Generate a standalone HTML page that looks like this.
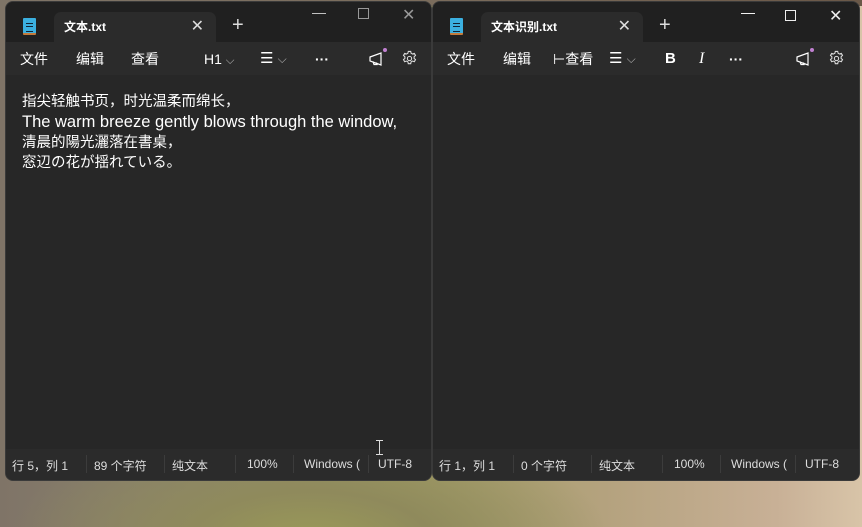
<!DOCTYPE html>
<html><head><meta charset="utf-8"><style>
*{margin:0;padding:0;box-sizing:border-box}
body{width:862px;height:527px;overflow:hidden;position:relative;font-family:"Liberation Sans","Noto Sans CJK SC",sans-serif;
background:radial-gradient(ellipse 300px 120px at 310px 540px,#9a9a58 0%,#8f8a5c 40%,transparent 100%),linear-gradient(90deg,#7f7467 0%,#8f8870 30%,#a3a064 45%,#b4a27e 70%,#c8b096 90%,#d8c4a8 100%);}
.top{position:absolute;left:0;top:0;width:862px;height:6px;background:linear-gradient(90deg,#7e7467,#7a6c5c 50%,#6a5848)}
.win{position:absolute;top:1px;height:480px;background:#272727;border-radius:8px;overflow:hidden;border:1px solid #3a3a3a}
.tb{position:absolute;left:0;top:0;right:0;height:40px;background:#202020}
.tab{position:absolute;top:10px;height:30px;background:#2b2b2b;border-radius:7px 7px 0 0;color:#fff;font-size:12px;font-weight:bold;line-height:30px;padding-left:10px}
.tab .x{position:absolute;right:12px;top:0;font-weight:normal;font-size:16px;color:#ddd}
.plus{position:absolute;top:13px;color:#ddd;font-size:20px;line-height:20px}
.wc{position:absolute;top:4px;color:#ccc;font-size:14px}
.tool{position:absolute;left:0;right:0;top:40px;height:33px;background:#2b2b2b;color:#fff;font-size:14px}
.tool span{position:absolute;top:9px;line-height:16px}
.tool svg{position:absolute}
.body{position:absolute;left:16px;top:90px;color:#fff;font-size:14.5px;line-height:20px;font-family:"Liberation Sans","Noto Sans CJK SC","Noto Sans CJK JP",sans-serif}
.sb{position:absolute;left:0;right:0;bottom:0;height:31px;background:#2b2b2b;color:#ddd;font-size:12px}
.sb span{position:absolute;top:8px;white-space:nowrap}
.sep{position:absolute;top:6px;width:1px;height:18px;background:#3c3c3c}
.ico{position:absolute;left:17px;top:16px;width:13px;height:17px;background:#3bb0e0;border-radius:1px;border-bottom:2px solid #c47a3a}
.ico::before{content:"";position:absolute;left:3px;top:5px;width:7px;height:7px;border-top:1px solid #123;border-bottom:1px solid #123}
.ico::after{content:"";position:absolute;left:3px;top:8px;width:7px;border-top:1px solid #123}
</style></head><body>
<div class="top"></div>

<div class="win" style="left:5px;width:427px">
 <div class="tb"></div>
 <div class="ico"></div>
 <div class="tab" style="left:48px;width:162px">文本.txt<span class="x">✕</span></div>
 <div class="plus" style="left:226px">+</div>
 <div class="wc" style="left:306px;top:2px">—</div>
 <div class="wc" style="left:352px;top:6px;width:11px;height:11px;border:1px solid #999"></div>
 <div class="wc" style="left:396px;top:3px;font-size:16px;color:#999">✕</div>
 <div class="tool">
  <span style="left:14px">文件</span><span style="left:70px">编辑</span><span style="left:125px">查看</span>
  <span style="left:198px">H1 <small style="color:#aaa">⌵</small></span>
  <span style="left:254px;font-size:15px">☰ <small style="color:#aaa;font-size:12px">⌵</small></span>
  <span style="left:309px;font-weight:bold">···</span>
  <svg style="left:362px;top:9px" width="16" height="16" viewBox="0 0 16 16" fill="none" stroke="#fff" stroke-width="1.2"><path d="M2 6l11-4v12L2 10z M5 10.5l1 3h3l-0.5-2"/></svg>
  <svg style="left:395px;top:8px" width="17" height="17" viewBox="0 0 24 24" fill="none" stroke="#ddd" stroke-width="1.5"><circle cx="12" cy="12" r="3"/><path d="M10.3 2h3.4l.6 2.6 2 1.1 2.5-.9 1.7 2.9-2 1.8v2.3l2 1.8-1.7 2.9-2.5-.9-2 1.1-.6 2.6h-3.4l-.6-2.6-2-1.1-2.5.9-1.7-2.9 2-1.8V9.5l-2-1.8 1.7-2.9 2.5.9 2-1.1z"/></svg>
  <i style="position:absolute;left:377px;top:6px;width:4px;height:4px;border-radius:2px;background:#c080d0"></i>
 </div>
 <div class="body">指尖轻触书页，时光温柔而绵长，<br><span style="font-size:16.5px">The warm breeze gently blows through the window,</span><br>清晨的陽光灑落在書桌，<br>窓辺の花が揺れている。</div>
 <div class="sb">
  <span style="left:6px">行 5，列 1</span><div class="sep" style="left:80px"></div>
  <span style="left:88px">89 个字符</span><div class="sep" style="left:158px"></div>
  <span style="left:166px">纯文本</span><div class="sep" style="left:229px"></div>
  <span style="left:241px">100%</span><div class="sep" style="left:287px"></div>
  <span style="left:298px">Windows (</span><div class="sep" style="left:362px"></div>
  <span style="left:372px">UTF-8</span>
 </div>
 <div style="position:absolute;left:370px;top:438px;width:7px;height:15px;border-left:0;"><div style="position:absolute;left:3px;top:0;width:1px;height:15px;background:#ddd"></div><div style="position:absolute;left:0;top:0;width:7px;height:1px;background:#ddd"></div><div style="position:absolute;left:0;top:14px;width:7px;height:1px;background:#ddd"></div></div>
</div>

<div class="win" style="left:432px;width:428px">
 <div class="tb"></div>
 <div class="ico"></div>
 <div class="tab" style="left:48px;width:162px">文本识别.txt<span class="x">✕</span></div>
 <div class="plus" style="left:226px">+</div>
 <div class="wc" style="left:308px;top:2px;color:#fff">—</div>
 <div class="wc" style="left:352px;top:8px;width:11px;height:11px;border:1px solid #eee"></div>
 <div class="wc" style="left:396px;top:4px;font-size:16px;color:#eee">✕</div>
 <div class="tool">
  <span style="left:14px">文件</span><span style="left:70px">编辑</span><span style="left:120px">⊢查看</span>
  <span style="left:176px;font-size:15px">☰ <small style="color:#aaa;font-size:12px">⌵</small></span>
  <span style="left:232px;font-weight:bold;font-size:15px">B</span>
  <span style="left:266px;font-style:italic;font-family:'Liberation Serif',serif;font-size:16px">I</span>
  <span style="left:296px;font-weight:bold">···</span>
  <svg style="left:362px;top:9px" width="16" height="16" viewBox="0 0 16 16" fill="none" stroke="#fff" stroke-width="1.2"><path d="M2 6l11-4v12L2 10z M5 10.5l1 3h3l-0.5-2"/></svg>
  <svg style="left:395px;top:8px" width="17" height="17" viewBox="0 0 24 24" fill="none" stroke="#ddd" stroke-width="1.5"><circle cx="12" cy="12" r="3"/><path d="M10.3 2h3.4l.6 2.6 2 1.1 2.5-.9 1.7 2.9-2 1.8v2.3l2 1.8-1.7 2.9-2.5-.9-2 1.1-.6 2.6h-3.4l-.6-2.6-2-1.1-2.5.9-1.7-2.9 2-1.8V9.5l-2-1.8 1.7-2.9 2.5.9 2-1.1z"/></svg>
  <i style="position:absolute;left:377px;top:6px;width:4px;height:4px;border-radius:2px;background:#c080d0"></i>
 </div>
 <div class="sb">
  <span style="left:6px">行 1，列 1</span><div class="sep" style="left:80px"></div>
  <span style="left:88px">0 个字符</span><div class="sep" style="left:158px"></div>
  <span style="left:166px">纯文本</span><div class="sep" style="left:229px"></div>
  <span style="left:241px">100%</span><div class="sep" style="left:287px"></div>
  <span style="left:298px">Windows (</span><div class="sep" style="left:362px"></div>
  <span style="left:372px">UTF-8</span>
 </div>
</div>
</body></html>
